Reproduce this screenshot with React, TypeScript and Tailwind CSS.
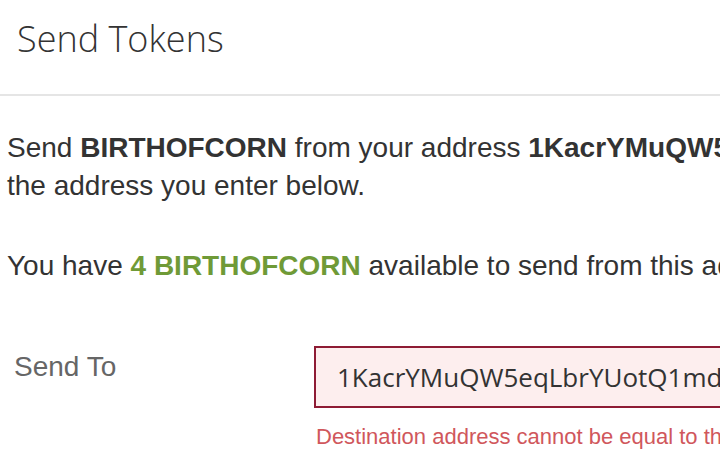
import React from "react";

const ADDRESS = "1KacrYMuQW5eqLbrYUotQ1mdXs2PnoTHvw";

const SendTokens = () => {
  return (
    <div className="w-[720px] h-[460px] overflow-hidden bg-white">
      <div className="w-[1100px]">
        <header className="h-[96px] border-b-2 border-[#e5e5e5] px-[17px] pt-[19px]">
          <h1 className="font-['Open_Sans',sans-serif] font-light text-[36px] leading-[40px] text-[#333]">
            Send Tokens
          </h1>
        </header>
        <main className="font-['Liberation_Sans',Arial,sans-serif] text-[#333]">
          <p className="px-[7px] pt-[33px] text-[28px] leading-[38px] whitespace-nowrap">
            Send <b>BIRTHOFCORN</b> from your address <b>{ADDRESS}</b> to
            <br />
            the address you enter below.
          </p>
          <p className="px-[7px] mt-[42px] text-[28px] leading-[38px] whitespace-nowrap">
            You have{" "}
            <b className="text-[#6f9a37]">4 BIRTHOFCORN</b> available to send
            from this address.
          </p>
          <div className="flex mt-[61px]">
            <label className="w-[314px] pl-[14px] pt-[2px] text-[28px] leading-[38px] text-[#666]">
              Send To
            </label>
            <div className="flex flex-col">
              <div className="w-[640px] h-[62px] border-2 border-[#8e1b34] bg-[#fdeeee] pl-[21px] flex items-center">
                <span className="font-['Open_Sans',sans-serif] text-[26px] text-[#333]">
                  {ADDRESS}
                </span>
              </div>
              <p className="pl-[2px] mt-[15px] text-[22px] leading-[28px] text-[#d0575c]">
                Destination address cannot be equal to the source address.
              </p>
            </div>
          </div>
        </main>
      </div>
    </div>
  );
};

export default function App() {
  return <SendTokens />;
}
